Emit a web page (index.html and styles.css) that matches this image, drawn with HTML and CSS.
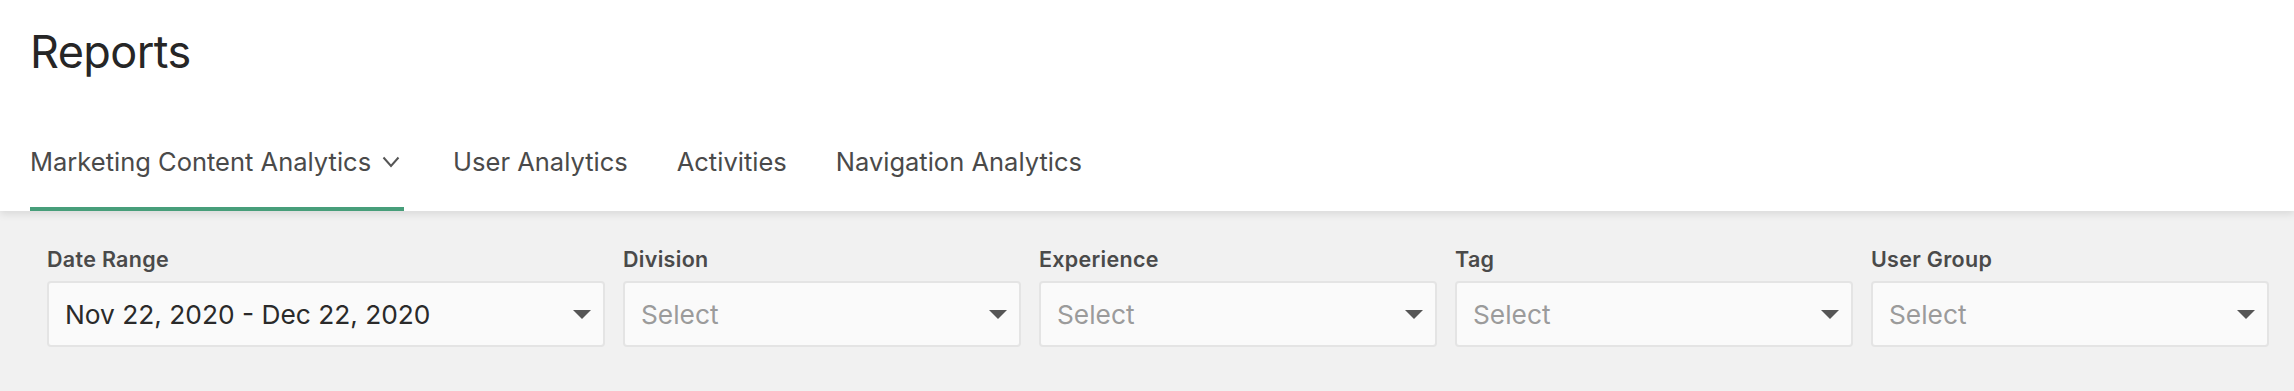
FILE: index.html
```html
<!DOCTYPE html>
<html lang="en">
<head>
<meta charset="utf-8">
<title>Reports</title>
<link rel="stylesheet" href="styles.css">
</head>
<body>
<header class="page-header">
  <h1 class="title">Reports</h1>
  <nav class="tabs">
    <a class="tab tab-active">Marketing Content Analytics
      <svg class="chev" width="18" height="12" viewBox="0 0 18 12"><path d="M1.5 1.5 L9 10 L16.5 1.5" fill="none" stroke="#555" stroke-width="2"/></svg>
    </a>
    <a class="tab">User Analytics</a>
    <a class="tab">Activities</a>
    <a class="tab">Navigation Analytics</a>
  </nav>
</header>
<section class="filters">
  <div class="field">
    <label class="label">Date Range</label>
    <div class="select"><span class="value">Nov 22, 2020 - Dec 22, 2020</span><span class="caret"></span></div>
  </div>
  <div class="field">
    <label class="label">Division</label>
    <div class="select"><span class="placeholder">Select</span><span class="caret"></span></div>
  </div>
  <div class="field">
    <label class="label">Experience</label>
    <div class="select"><span class="placeholder">Select</span><span class="caret"></span></div>
  </div>
  <div class="field">
    <label class="label">Tag</label>
    <div class="select"><span class="placeholder">Select</span><span class="caret"></span></div>
  </div>
  <div class="field">
    <label class="label">User Group</label>
    <div class="select"><span class="placeholder">Select</span><span class="caret"></span></div>
  </div>
</section>
</body>
</html>
```
FILE: styles.css
```css
* { box-sizing: border-box; }
html, body {
  margin: 0;
  padding: 0;
  height: 100%;
}
body {
  font-family: Inter, "Noto Sans", "Liberation Sans", sans-serif;
  background: #f1f1f1;
}
.page-header {
  position: relative;
  z-index: 2;
  background: #ffffff;
  padding: 24px 0 0 30px;
  box-shadow: 0 3px 8px rgba(0, 0, 0, 0.10);
}
.title {
  margin: 0;
  font-size: 45px;
  line-height: 56px;
  font-weight: 400;
  color: #262626;
  letter-spacing: -0.6px;
}
.tabs {
  display: flex;
  gap: 49px;
  margin-top: 66px;
}
.tab {
  display: flex;
  align-items: center;
  font-size: 25.5px;
  line-height: 32px;
  color: #4a4a4a;
  padding-bottom: 29px;
  border-bottom: 4px solid transparent;
  white-space: nowrap;
}
.tab-active {
  border-bottom-color: #479e7a;
}
.chev {
  margin-left: 11px;
  margin-right: 4px;
}
.filters {
  display: grid;
  grid-template-columns: 558px repeat(4, 1fr);
  column-gap: 18px;
  padding: 36px 25px 44px 47px;
  background: #f1f1f1;
}
.field {
  display: flex;
  flex-direction: column;
}
.label {
  font-size: 21.5px;
  line-height: 24px;
  font-weight: 600;
  letter-spacing: 0.3px;
  color: #4a4a4a;
  margin-bottom: 10px;
}
.select {
  height: 66px;
  display: flex;
  align-items: center;
  justify-content: space-between;
  padding: 0 12px 0 16px;
  background: #fafafa;
  border: 2px solid #e4e4e4;
  border-radius: 4px;
}
.value {
  font-size: 26.3px;
  color: #2a2a2a;
}
.placeholder {
  font-size: 26.3px;
  color: #9b9b9b;
}
.caret {
  width: 0;
  height: 0;
  border-left: 9px solid transparent;
  border-right: 9px solid transparent;
  border-top: 9px solid #555555;
}
```
